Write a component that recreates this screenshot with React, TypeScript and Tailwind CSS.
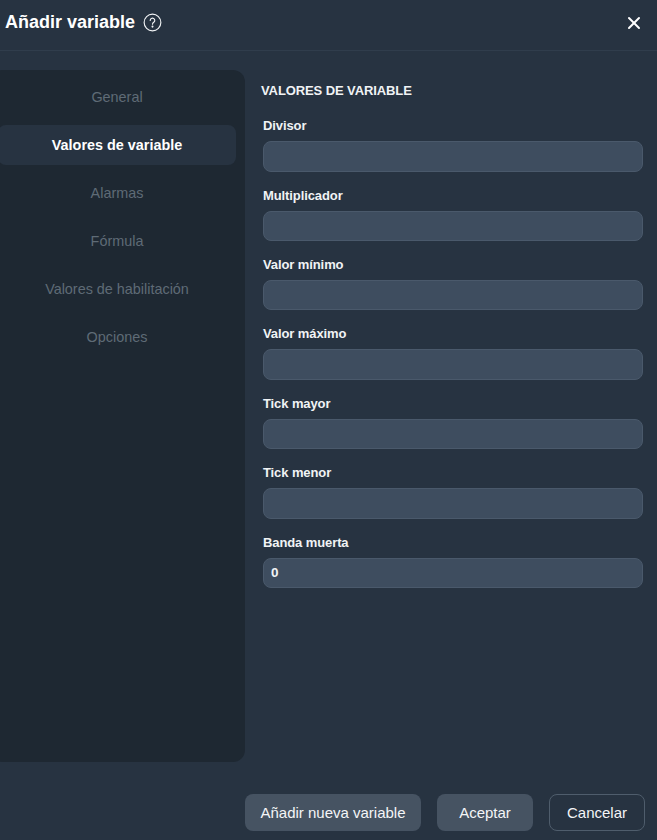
import React from "react";
import { X } from "lucide-react";

const sections = ["General", "Valores de variable", "Alarmas", "Fórmula", "Valores de habilitación", "Opciones"];

const fields = [
  { label: "Divisor", value: "" },
  { label: "Multiplicador", value: "" },
  { label: "Valor mínimo", value: "" },
  { label: "Valor máximo", value: "" },
  { label: "Tick mayor", value: "" },
  { label: "Tick menor", value: "" },
  { label: "Banda muerta", value: "0" },
];

const App: React.FC = () => {
  return (
    <div className="w-[657px] h-[840px] overflow-hidden bg-[#273341] flex flex-col font-['Liberation_Sans',Arial,sans-serif] text-white">
      <header className="h-[51px] shrink-0 border-b border-[#303d4c] flex items-center justify-between pl-[5px] pr-[13px] pb-[5px]">
        <div className="flex items-center gap-[8px]">
          <h1 className="text-[18px] font-bold leading-[20px] pb-[2px]">Añadir variable</h1>
          <svg width="19" height="19" viewBox="0 0 20 20" fill="none" stroke="#f1f3f5" strokeWidth="1.2">
            <circle cx="10" cy="10" r="8.8" />
            <path d="M7.6 7.8a2.4 2.4 0 1 1 3.7 2c-.9.6-1.3 1-1.3 2" strokeLinecap="round" />
            <circle cx="10" cy="14.3" r="0.5" fill="#f1f3f5" />
          </svg>
        </div>
        <X size={20} strokeWidth={2.4} className="text-white" />
      </header>

      <div className="flex h-[692px] mt-[19px] shrink-0">
        <nav className="w-[255px] -ml-[10px] shrink-0 bg-[#1e2832] rounded-[12px] pt-[7px] pl-[8px] pr-[9px] flex flex-col gap-[8px]">
          {sections.map((s) => (
            <div
              key={s}
              className={
                s === "Valores de variable"
                  ? "h-[40px] pt-[2px] flex items-center justify-center rounded-[8px] bg-[#273341] text-[14.4px] font-bold text-white"
                  : "h-[40px] pt-[2px] flex items-center justify-center rounded-[8px] text-[14.4px] text-[#5f6b76]"
              }
            >
              {s}
            </div>
          ))}
        </nav>

        <section className="flex-1 pl-[16px] pr-[14px] pt-[13px]">
          <h2 className="text-[13px] font-bold leading-[16px] tracking-[-0.1px] text-[#f1f3f5]">VALORES DE VARIABLE</h2>
          <div className="mt-[19.2px] pl-[2px] flex flex-col gap-[16px]">
            {fields.map((f) => (
              <label key={f.label} className="block">
                <span className="block text-[13px] font-bold leading-[16px] tracking-[-0.1px] text-[#f1f3f5] h-[23px]">{f.label}</span>
                <input
                  readOnly
                  value={f.value}
                  className="block w-full h-[30.4px] rounded-[8px] bg-[#3e4d5f] border border-[#4a596b] pl-[7px] pr-[7px] pb-[1px] text-[13.5px] font-bold text-[#f1f3f5] outline-none"
                />
              </label>
            ))}
          </div>
        </section>
      </div>

      <footer className="flex justify-end gap-[16px] pr-[12px] mt-[32px]">
        <button className="w-[176px] h-[37px] pt-[2px] rounded-[8px] bg-[#465362] text-[15px] text-[#f4f5f7]">Añadir nueva variable</button>
        <button className="w-[96px] h-[37px] pt-[2px] rounded-[8px] bg-[#465362] text-[15px] text-[#f4f5f7]">Aceptar</button>
        <button className="w-[96px] h-[37px] pt-[2px] rounded-[8px] border border-[#4f5d6c] text-[15px] text-[#f4f5f7]">Cancelar</button>
      </footer>
    </div>
  );
};

export default App;
